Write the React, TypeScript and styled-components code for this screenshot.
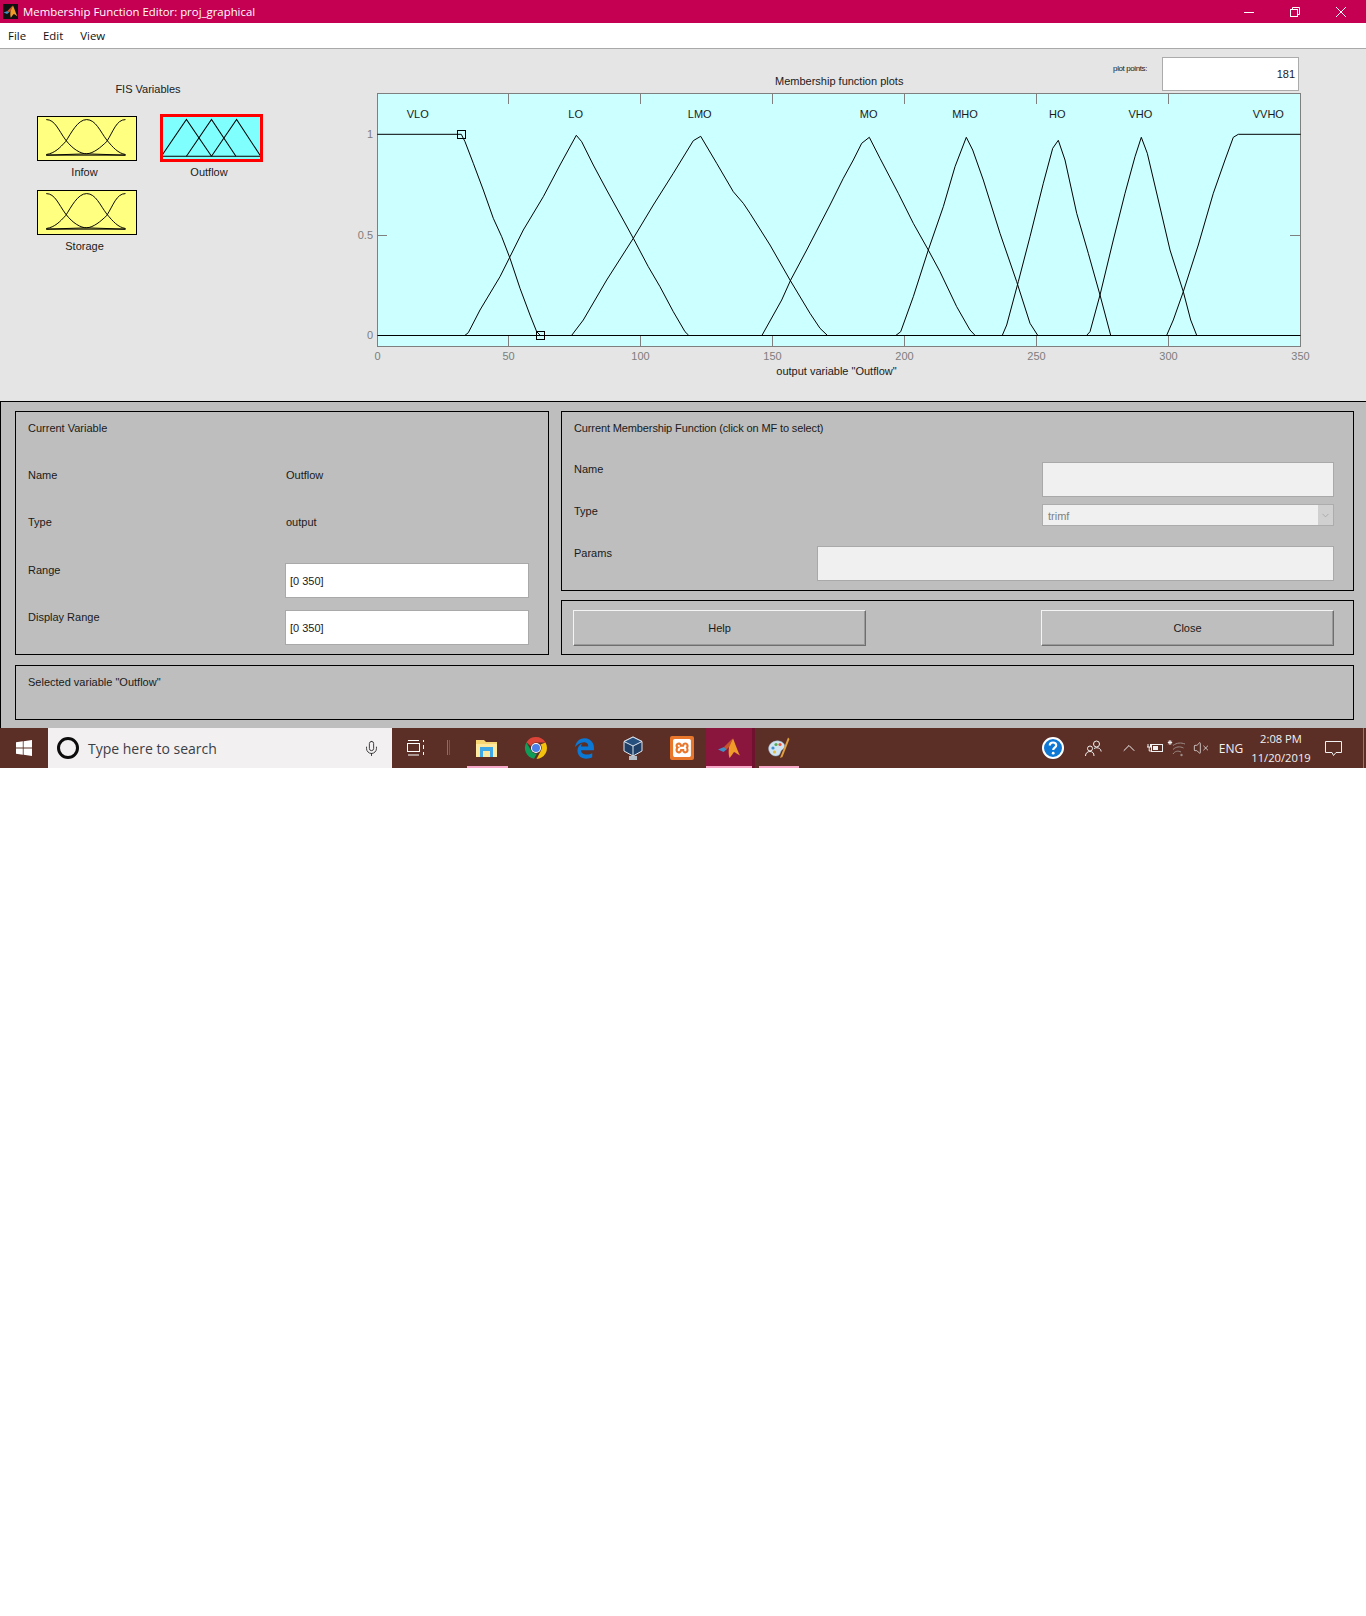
import styled, { createGlobalStyle } from 'styled-components';
import { ChevronDown, ChevronUp, Mic, VolumeX } from 'lucide-react';
import { FaEdgeLegacy } from 'react-icons/fa6';
import { SiXampp } from 'react-icons/si';

const GlobalStyle = createGlobalStyle`
    html, body {
        margin: 0;
        padding: 0;
        background: #fff;
    }

    * {
        box-sizing: border-box;
    }
`;

const uiFont = '"Liberation Sans", Arial, sans-serif';
const winFont = '"Open Sans", "Noto Sans", sans-serif';

const Page = styled.div`
    width: 1366px;
    font-family: ${uiFont};
    font-size: 11px;
    line-height: 13px;
    color: #1a1a1a;
`;

const TitleBar = styled.div`
    height: 23px;
    background: #c50052;
    color: #fff;
    display: flex;
    align-items: center;
    padding-left: 3px;
    font-family: ${winFont};
    font-size: 11.4px;
`;

const TitleIcon = styled.div`
    width: 15px;
    height: 15px;
    background: #111;
    display: grid;
    place-content: center;
    margin-right: 5px;
`;

const WindowButtons = styled.div`
    margin-left: auto;
    padding-right: 2px;
    display: flex;
`;

const WindowButton = styled.div`
    width: 46px;
    height: 23px;
    display: grid;
    place-content: center;
`;

const MenuBar = styled.div`
    height: 26px;
    background: #fff;
    border-bottom: 1px solid #a9a9a9;
    display: flex;
    align-items: center;
    padding-left: 8px;
    gap: 17px;
    font-family: ${winFont};
    font-size: 11.4px;
    color: #111;
`;

const TopArea = styled.div`
    height: 352px;
    background: #e5e5e5;
    display: flex;
`;

const VariablesPane = styled.div`
    width: 340px;
    padding: 34px 0 0 37px;
`;

const PaneHeading = styled.div`
    width: 222px;
    text-align: center;
`;

const VariableGrid = styled.div`
    margin-top: 18px;
    display: grid;
    grid-template-columns: 123px 103px;
    grid-template-rows: 74px auto;
`;

const VariableCell = styled.div``;

const Thumb = styled.div<{ $selected?: boolean }>`
    display: block;
    width: ${(p) => (p.$selected ? '103px' : '100px')};
    height: ${(p) => (p.$selected ? '48px' : '45px')};
    margin-top: ${(p) => (p.$selected ? '0' : '2px')};
    background: ${(p) => (p.$selected ? '#80ffff' : '#ffff80')};
    border: ${(p) => (p.$selected ? '3px solid #ff0000' : '1px solid #000')};
    overflow: hidden;

    > svg {
        display: block;
        width: 100%;
        height: 100%;
    }
`;

const ThumbLabel = styled.div<{ $selected?: boolean }>`
    width: ${(p) => (p.$selected ? '103px' : '100px')};
    margin-top: ${(p) => (p.$selected ? '4px' : '5px')};
    padding-right: 5px;
    text-align: center;
`;

const PlotPane = styled.div`
    flex: 1;
    padding-top: 8px;
`;

const PlotHeader = styled.div`
    height: 35px;
    display: flex;
`;

const PlotTitle = styled.div`
    margin: 18px 0 0 435px;
`;

const PlotPointsLabel = styled.div`
    margin: 5px 15px 0 auto;
    font-size: 8px;
    letter-spacing: -0.4px;
`;

const PlotPointsInput = styled.div`
    width: 137px;
    height: 34px;
    margin-right: 67px;
    background: #fff;
    border: 1px solid #ababab;
    display: flex;
    align-items: center;
    justify-content: flex-end;
    padding-right: 3px;
`;

const PlotSvg = styled.svg`
    display: block;
    width: 990px;
    height: 300px;
`;

const AxisText = styled.text`
    font-family: ${uiFont};
    font-size: 11px;
    fill: #7d7d7d;
`;

const MfText = styled.text`
    font-family: ${uiFont};
    font-size: 11px;
    fill: #1a1a1a;
`;

const BottomArea = styled.div`
    height: 327px;
    background: #bebebe;
    border-top: 1px solid #000;
    border-left: 1px solid #000;
    padding: 9px 12px 0 14px;
    display: grid;
    grid-template-columns: 534px 793px;
    grid-template-rows: 244px 55px;
    column-gap: 12px;
    row-gap: 10px;
`;

const RightStack = styled.div`
    display: grid;
    grid-template-rows: 180px 55px;
    row-gap: 9px;
`;

const Panel = styled.div`
    border: 1px solid #000;
`;

const VariablePanel = styled(Panel)`
    padding: 10px 0 0 12px;
    display: grid;
    grid-template-rows: 47px 47px 48px 47px auto;
`;

const VariableRow = styled.div`
    display: grid;
    grid-template-columns: 257px 244px;
    align-items: start;

    > div {
        margin-top: -1px;
    }
`;

const VariableValue = styled.span`
    padding-left: 1px;
`;

const MfPanel = styled(Panel)`
    padding: 10px 19px 0 12px;
    display: grid;
    grid-template-rows: 41px 42px 42px auto;
`;

const MfHeading = styled.div`
    letter-spacing: -0.12px;
`;

const MfRow = styled.div`
    display: flex;
    justify-content: space-between;
    align-items: flex-start;

    > div {
        margin-top: -1px;
    }
`;

const EditBox = styled.div<{ $disabled?: boolean; $width?: number }>`
    width: ${(p) => (p.$width ? `${p.$width}px` : '100%')};
    height: 35px;
    background: ${(p) => (p.$disabled ? '#f0f0f0' : '#fff')};
    border: 1px solid #a9a9a9;
    display: flex;
    align-items: center;
    padding: 1px 0 0 4px;
`;

const PopupBox = styled.div`
    width: 292px;
    height: 22px;
    background: #f0f0f0;
    border: 1px solid #acacac;
    display: flex;
    align-items: center;
    padding: 2px 0 0 5px;
    color: #7f7f7f;
`;

const PopupArrow = styled.div`
    margin-left: auto;
    margin-top: -2px;
    width: 15px;
    height: 20px;
    background: #d0d0d0;
    display: grid;
    place-content: center;
    color: #9c9c9c;
`;

const ButtonPanel = styled(Panel)`
    padding: 9px 19px 0 11px;
    display: flex;
    justify-content: space-between;
    align-items: flex-start;
`;

const PushButton = styled.div`
    width: 293px;
    height: 36px;
    background: #bebebe;
    border: 1px solid;
    border-color: #f4f4f4 #6e6e6e #6e6e6e #f4f4f4;
    box-shadow: inset -1px -1px 0 #9a9a9a;
    display: grid;
    place-content: center;
`;

const StatusPanel = styled(Panel)`
    grid-column: 1 / 3;
    padding: 10px 0 0 12px;
`;

const Taskbar = styled.div`
    height: 40px;
    background: #5b2e26;
    display: flex;
    color: #fff;
    font-family: ${winFont};
`;

const StartButton = styled.div`
    width: 48px;
    display: grid;
    place-content: center;
`;

const SearchBox = styled.div`
    width: 344px;
    background: #f3f0f1;
    display: flex;
    align-items: center;
    padding: 0 12px 0 9px;
    color: #3a3f46;
    font-size: 14px;
`;

const SearchCircle = styled.div`
    width: 22px;
    height: 22px;
    border: 3px solid #0c0c0c;
    border-radius: 50%;
    margin-right: 9px;
`;

const SearchText = styled.div`
    flex: 1;
`;

const TaskView = styled.div`
    width: 47px;
    display: grid;
    place-content: center;
`;

const TaskSeparator = styled.div`
    width: 3px;
    margin: 12px 0 13px 8px;
    border-left: 1px solid #8a6f68;
    border-right: 1px solid #75574f;
`;

const AppList = styled.div`
    margin-left: 13px;
    display: flex;
`;

const AppSlot = styled.div<{ $open?: boolean; $active?: boolean }>`
    position: relative;
    width: 48.6px;
    display: grid;
    place-content: center;
    background: ${(p) => (p.$active ? '#8a163e' : 'transparent')};
    border-right: ${(p) => (p.$active ? '3px solid #6e1230' : '0')};

    &::after {
        content: '';
        display: ${(p) => (p.$open ? 'block' : 'none')};
        position: absolute;
        left: ${(p) => (p.$active ? '0' : '4px')};
        right: ${(p) => (p.$active ? '0' : '4px')};
        bottom: 0;
        height: 2px;
        background: #f7a8c8;
    }
`;

const XamppTile = styled.div`
    width: 24px;
    height: 24px;
    border-radius: 2px;
    background: #e8762b;
    display: grid;
    place-content: center;
`;

const Tray = styled.div`
    margin-left: auto;
    display: flex;
`;

const TrayItem = styled.div<{ $width: number }>`
    width: ${(p) => p.$width}px;
    display: grid;
    place-content: center;
    font-size: 12px;
    color: #f2f2f2;
`;

const ClockText = styled.div`
    text-align: center;
    font-size: 11.2px;
    line-height: 19px;
    white-space: nowrap;
`;

const ShowDesktop = styled.div`
    width: 12px;
    display: flex;
    justify-content: flex-end;
    padding-right: 2px;

    &::after {
        content: '';
        width: 1px;
        background: #8f7a74;
    }
`;

// curve points are measured on the 3x crop, x origin at 340, y origin at 50
const curves: number[][] = [
    [112, 253, 364, 253, 375, 275, 400, 340, 430, 420, 460, 505, 485, 560, 510, 625, 540, 715, 570, 795, 590, 845, 601, 856],
    [375, 856, 385, 848, 420, 780, 480, 680, 510, 620, 550, 540, 610, 440, 660, 345, 709, 256, 725, 275, 760, 345, 800, 420, 850, 510, 880, 565, 925, 650, 960, 710, 1000, 785, 1035, 845, 1046, 856],
    [695, 856, 730, 810, 800, 690, 880, 565, 940, 465, 1000, 370, 1060, 272, 1082, 259, 1130, 340, 1180, 425, 1210, 460, 1230, 490, 1290, 585, 1350, 690, 1410, 790, 1440, 835, 1462, 856],
    [1266, 856, 1325, 750, 1352, 690, 1400, 600, 1470, 465, 1510, 385, 1540, 330, 1565, 280, 1588, 262, 1620, 325, 1675, 430, 1720, 520, 1765, 600, 1800, 665, 1850, 770, 1890, 840, 1905, 856],
    [1668, 856, 1682, 845, 1720, 740, 1765, 600, 1810, 470, 1845, 350, 1879, 262, 1898, 300, 1930, 390, 1980, 550, 2030, 695, 2070, 820, 2093, 856],
    [1987, 856, 2000, 825, 2035, 695, 2070, 560, 2110, 400, 2138, 295, 2155, 271, 2175, 330, 2210, 490, 2245, 610, 2280, 735, 2312, 856],
    [2240, 856, 2250, 845, 2280, 735, 2320, 570, 2355, 430, 2385, 320, 2404, 262, 2422, 310, 2455, 450, 2490, 600, 2530, 725, 2552, 810, 2570, 856],
    [2480, 856, 2500, 810, 2530, 725, 2575, 585, 2620, 430, 2655, 330, 2680, 262, 2695, 253, 2882, 253],
];

const toPoints = (points: number[]) => {
    const out: string[] = [];
    for (let i = 0; i < points.length; i += 2) {
        out.push(`${(points[i] / 3).toFixed(1)},${(points[i + 1] / 3 + 50).toFixed(1)}`);
    }
    return out.join(' ');
};

const xTicks = [
    { x: 37.5, label: '0' },
    { x: 168.5, label: '50' },
    { x: 300.5, label: '100' },
    { x: 432.5, label: '150' },
    { x: 564.5, label: '200' },
    { x: 696.5, label: '250' },
    { x: 828.5, label: '300' },
    { x: 960.5, label: '350' },
];

const mfLabels = [
    { x: 77.7, label: 'VLO' },
    { x: 235.7, label: 'LO' },
    { x: 359.7, label: 'LMO' },
    { x: 528.7, label: 'MO' },
    { x: 625, label: 'MHO' },
    { x: 717.3, label: 'HO' },
    { x: 800.3, label: 'VHO' },
    { x: 928.3, label: 'VVHO' },
];

const MembershipPlot = () => (
    <PlotSvg viewBox="0 92 990 300">
        <rect x="37.5" y="93.5" width="923" height="253" fill="#ccffff" stroke="#7f7f7f" />
        {xTicks.slice(1, 7).map((tick) => (
            <g key={tick.x} stroke="#7f7f7f">
                <line x1={tick.x} y1="94" x2={tick.x} y2="104" />
                <line x1={tick.x} y1="336" x2={tick.x} y2="346" />
            </g>
        ))}
        <line x1="38" y1="235.5" x2="47" y2="235.5" stroke="#7f7f7f" />
        <line x1="950" y1="235.5" x2="960" y2="235.5" stroke="#7f7f7f" />
        <line x1="37.5" y1="335.5" x2="960.5" y2="335.5" stroke="#000" />
        {curves.map((curve, index) => (
            <polyline key={index} points={toPoints(curve)} fill="none" stroke="#000" strokeWidth="1" />
        ))}
        <rect x="117.5" y="130.5" width="8" height="8" fill="none" stroke="#000" />
        <rect x="196.5" y="331.5" width="8" height="8" fill="none" stroke="#000" />
        {mfLabels.map((mf) => (
            <MfText key={mf.label} x={mf.x} y="118" textAnchor="middle">{mf.label}</MfText>
        ))}
        {xTicks.map((tick) => (
            <AxisText key={tick.label} x={tick.x} y="360" textAnchor="middle">{tick.label}</AxisText>
        ))}
        <AxisText x="33" y="138" textAnchor="end">1</AxisText>
        <AxisText x="33" y="239" textAnchor="end">0.5</AxisText>
        <AxisText x="33" y="339" textAnchor="end">0</AxisText>
        <MfText x="496.5" y="375" textAnchor="middle">output variable "Outflow"</MfText>
    </PlotSvg>
);

const BellThumb = () => (
    <svg viewBox="0 0 298 133" fill="none" stroke="#000" strokeWidth="3">
        <path d="M23 8C50 8 60 40 83 71C105 100 130 114 148 114L268 118" />
        <path d="M23 116C50 112 65 95 83 76C100 50 120 8 148 8C176 8 190 45 210 71C230 95 245 112 268 116" />
        <path d="M23 118L148 114C170 112 190 95 210 76C230 45 240 8 268 8" />
        <path d="M23 118H268" />
    </svg>
);

const TriangleThumb = () => (
    <svg viewBox="0 0 290 125" fill="none" stroke="#000" strokeWidth="3">
        <path d="M-5 117L70 7L145 117" />
        <path d="M70 117L145 7L218 117" />
        <path d="M145 117L220 7L292 117" />
        <path d="M-5 117H292" />
    </svg>
);

const MatlabIcon = ({ size }: { size: number }) => (
    <svg width={size} height={size} viewBox="0 0 24 24">
        <path d="M1 13.5L7 11L10 13L6.5 16Z" fill="#3f8fc4" />
        <path d="M7 11L14 4L16 2.5L12 11L9.5 13.5Z" fill="#c8552a" />
        <path d="M16 2.5C18 7 20.5 15 23 19.5C20.5 18 18.5 16.5 17 16C15.5 18 13.5 21 12.5 22C11.5 19 11.5 15 12 11Z" fill="#f09a2a" />
    </svg>
);

const App = () => (
    <Page>
        <GlobalStyle />
        <TitleBar>
            <TitleIcon><MatlabIcon size={15} /></TitleIcon>
            Membership Function Editor: proj_graphical
            <WindowButtons>
                <WindowButton>
                    <svg width="10" height="10" viewBox="0 0 10 10"><path d="M0 5.5H10" stroke="#fff" /></svg>
                </WindowButton>
                <WindowButton>
                    <svg width="10" height="10" viewBox="0 0 10 10" fill="none" stroke="#fff">
                        <rect x="0.5" y="2.5" width="7" height="7" />
                        <path d="M2.5 2.5V0.5H9.5V7.5H7.5" />
                    </svg>
                </WindowButton>
                <WindowButton>
                    <svg width="10" height="10" viewBox="0 0 10 10"><path d="M0 0L10 10M10 0L0 10" stroke="#fff" /></svg>
                </WindowButton>
            </WindowButtons>
        </TitleBar>
        <MenuBar>
            <span>File</span>
            <span>Edit</span>
            <span>View</span>
        </MenuBar>
        <TopArea>
            <VariablesPane>
                <PaneHeading>FIS Variables</PaneHeading>
                <VariableGrid>
                    <VariableCell>
                        <Thumb><BellThumb /></Thumb>
                        <ThumbLabel>Infow</ThumbLabel>
                    </VariableCell>
                    <VariableCell>
                        <Thumb $selected><TriangleThumb /></Thumb>
                        <ThumbLabel $selected>Outflow</ThumbLabel>
                    </VariableCell>
                    <VariableCell>
                        <Thumb><BellThumb /></Thumb>
                        <ThumbLabel>Storage</ThumbLabel>
                    </VariableCell>
                </VariableGrid>
            </VariablesPane>
            <PlotPane>
                <PlotHeader>
                    <PlotTitle>Membership function plots</PlotTitle>
                    <PlotPointsLabel>plot points:</PlotPointsLabel>
                    <PlotPointsInput>181</PlotPointsInput>
                </PlotHeader>
                <MembershipPlot />
            </PlotPane>
        </TopArea>
        <BottomArea>
            <VariablePanel>
                <div>Current Variable</div>
                <VariableRow><span>Name</span><VariableValue>Outflow</VariableValue></VariableRow>
                <VariableRow><span>Type</span><VariableValue>output</VariableValue></VariableRow>
                <VariableRow><span>Range</span><EditBox>[0 350]</EditBox></VariableRow>
                <VariableRow><span>Display Range</span><EditBox>[0 350]</EditBox></VariableRow>
            </VariablePanel>
            <RightStack>
                <MfPanel>
                    <MfHeading>Current Membership Function (click on MF to select)</MfHeading>
                    <MfRow><span>Name</span><EditBox $disabled $width={292} /></MfRow>
                    <MfRow>
                        <span>Type</span>
                        <PopupBox>
                            trimf
                            <PopupArrow><ChevronDown size={11} strokeWidth={1.5} /></PopupArrow>
                        </PopupBox>
                    </MfRow>
                    <MfRow><span>Params</span><EditBox $disabled $width={517} /></MfRow>
                </MfPanel>
                <ButtonPanel>
                    <PushButton>Help</PushButton>
                    <PushButton>Close</PushButton>
                </ButtonPanel>
            </RightStack>
            <StatusPanel>Selected variable "Outflow"</StatusPanel>
        </BottomArea>
        <Taskbar>
            <StartButton>
                <svg width="16" height="16" viewBox="0 0 16 16" fill="#fff">
                    <path d="M0 2.3L6.8 1.3V7.6H0ZM7.6 1.2L16 0V7.6H7.6ZM0 8.4H6.8V14.7L0 13.7ZM7.6 8.4H16V16L7.6 14.8Z" />
                </svg>
            </StartButton>
            <SearchBox>
                <SearchCircle />
                <SearchText>Type here to search</SearchText>
                <Mic size={17} strokeWidth={1.2} color="#222" />
            </SearchBox>
            <TaskView>
                <svg width="18" height="16" viewBox="0 0 18 16" fill="none" stroke="#fff">
                    <rect x="0.5" y="3.5" width="12" height="8" />
                    <path d="M1 0.5H12M1 15H12M16.5 0V2M16.5 5V9M16.5 12V15" />
                </svg>
            </TaskView>
            <TaskSeparator />
            <AppList>
                <AppSlot $open>
                    <svg width="22" height="20" viewBox="0 0 22 20">
                        <path d="M0 2H8L10 4H21V19H0Z" fill="#f7d774" />
                        <path d="M0 6H21V19H0Z" fill="#fde9a0" />
                        <path d="M4 9H17V19H14V13H7V19H4Z" fill="#3fa9e8" />
                    </svg>
                </AppSlot>
                <AppSlot>
                    <svg width="24" height="24" viewBox="0 0 24 24">
                        <path d="M12 1A11 11 0 0 1 21.5 6.5H12A5.5 5.5 0 0 0 6.9 10L2.4 6.4A11 11 0 0 1 12 1Z" fill="#db4437" />
                        <path d="M21.5 6.5A11 11 0 0 1 12.5 23L17 14.5A5.5 5.5 0 0 0 16.5 8.5Z" fill="#f4c20d" />
                        <path d="M2.4 6.4L7.1 14.5A5.5 5.5 0 0 0 13 17.4L10 22.8A11 11 0 0 1 2.4 6.4Z" fill="#0f9d58" />
                        <circle cx="12" cy="12" r="5" fill="#fff" />
                        <circle cx="12" cy="12" r="4" fill="#4a80e8" />
                    </svg>
                </AppSlot>
                <AppSlot><FaEdgeLegacy size={21} color="#0b78d6" /></AppSlot>
                <AppSlot>
                    <svg width="22" height="25" viewBox="0 0 22 25">
                        <path d="M11 1L20 5.5V15L11 20L2 15V5.5Z" fill="#1f3f66" stroke="#dfe6ee" />
                        <path d="M11 1L20 5.5L11 10L2 5.5Z" fill="#28507f" stroke="#dfe6ee" />
                        <path d="M11 10V20" stroke="#dfe6ee" />
                        <path d="M7 20H15V24H7Z" fill="#b4bcc6" />
                    </svg>
                </AppSlot>
                <AppSlot>
                    <XamppTile><SiXampp size={18} color="#fff" /></XamppTile>
                </AppSlot>
                <AppSlot $open $active><MatlabIcon size={24} /></AppSlot>
                <AppSlot $open>
                    <svg width="24" height="24" viewBox="0 0 24 24">
                        <path d="M2 15C0 9 6 4 12 5C18 6 19 11 16 13C13 15 14 17 12 19C9 21 4 20 2 15Z" fill="#cfe3f2" stroke="#9ab6cc" strokeWidth="0.5" />
                        <circle cx="6" cy="12" r="1.6" fill="#3f8fd0" />
                        <circle cx="9" cy="8.5" r="1.6" fill="#4fae55" />
                        <circle cx="13" cy="8.5" r="1.6" fill="#e4573d" />
                        <circle cx="7.5" cy="16" r="1.6" fill="#e6b93a" />
                        <path d="M21 1.5L22.5 3L15.5 21L13 22Z" fill="#e0a040" />
                    </svg>
                </AppSlot>
            </AppList>
            <Tray>
                <TrayItem $width={41}>
                    <svg width="24" height="24" viewBox="0 0 24 24">
                        <circle cx="12" cy="12" r="10" fill="#0f78d4" stroke="#fff" strokeWidth="2" />
                        <path d="M8.8 9.5C8.8 7.5 10.2 6.5 12 6.5C13.9 6.5 15.2 7.6 15.2 9.2C15.2 11.6 12.2 11.6 12.2 14" fill="none" stroke="#fff" strokeWidth="2.2" />
                        <circle cx="12.2" cy="17.2" r="1.4" fill="#fff" />
                    </svg>
                </TrayItem>
                <TrayItem $width={40}>
                    <svg width="17" height="17" viewBox="0 0 17 17" fill="none" stroke="#f2f2f2">
                        <circle cx="11.5" cy="4" r="3" />
                        <circle cx="5" cy="8.5" r="2.5" />
                        <path d="M0.5 16C0.5 13 2.5 11.5 5 11.5C7.5 11.5 9 13 9 16M9 8.5C10.5 7.5 13 7.5 14.5 8.5C15.5 9.2 16 10.2 16.2 11.5" />
                    </svg>
                </TrayItem>
                <TrayItem $width={31}><ChevronUp size={20} strokeWidth={1.2} /></TrayItem>
                <TrayItem $width={21}>
                    <svg width="16" height="12" viewBox="0 0 16 12" fill="none" stroke="#f2f2f2">
                        <rect x="4.5" y="2.5" width="11" height="7" />
                        <rect x="6" y="4" width="5" height="4" fill="#f2f2f2" stroke="none" />
                        <path d="M1 2V5M3.5 2V5M0 5H4.5M2.2 5V9H5" />
                    </svg>
                </TrayItem>
                <TrayItem $width={24}>
                    <svg width="16" height="17" viewBox="0 0 16 17" fill="none" stroke="#9c8d88" overflow="visible">
                        <path d="M4 14C6 11 9 10.5 12 12M4 9.5C7 6.5 11 6.2 14.5 8M4 5.5C8 2.5 12 2.5 16 4" />
                        <path d="M1 0V5M-1.2 2.5H3.2M-0.6 0.8L2.6 4.2M2.6 0.8L-0.6 4.2" stroke="#f2f2f2" />
                        <circle cx="12.5" cy="15" r="1.2" fill="#9c8d88" stroke="none" />
                    </svg>
                </TrayItem>
                <TrayItem $width={23}><VolumeX size={16} strokeWidth={1.1} /></TrayItem>
                <TrayItem $width={38}>ENG</TrayItem>
                <TrayItem $width={62}>
                    <ClockText>2:08 PM<br />11/20/2019</ClockText>
                </TrayItem>
                <TrayItem $width={42}>
                    <svg width="17" height="17" viewBox="0 0 17 17" fill="none" stroke="#f2f2f2">
                        <path d="M0.5 1.5H16.5V12.5H11L8.5 15.5L7 12.5H0.5Z" />
                    </svg>
                </TrayItem>
                <ShowDesktop />
            </Tray>
        </Taskbar>
    </Page>
);

export default App;
